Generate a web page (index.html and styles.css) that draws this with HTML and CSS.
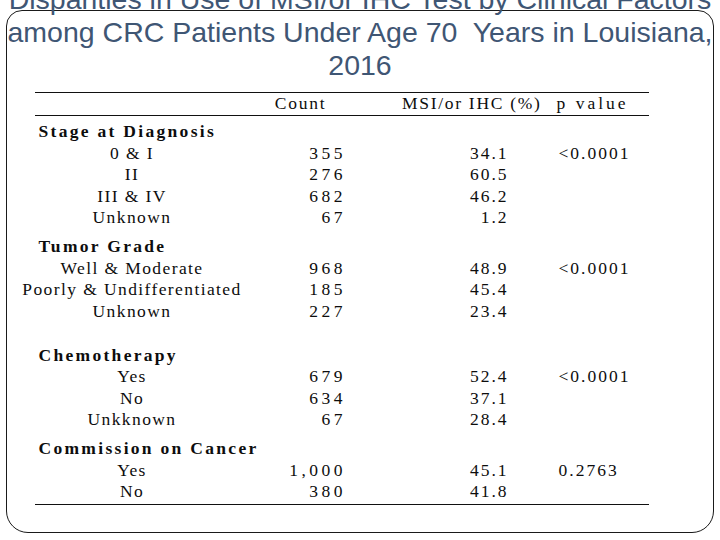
FILE: index.html
```html
<!DOCTYPE html>
<html lang="en">
<head>
<meta charset="utf-8">
<title>Disparities in Use of MSI/or IHC Test</title>
<link rel="stylesheet" href="styles.css">
</head>
<body>
<div class="slide">
  <h1 class="title">
    <span class="tline">Disparities in Use of MSI/or IHC Test by Clinical Factors</span>
    <span class="tline">among CRC Patients Under Age 70&nbsp; Years in Louisiana,</span>
    <span class="tline">2016</span>
  </h1>
  <div class="tbl">
    <div class="row head">
      <div class="c1"></div>
      <div class="c2 h-count">Count</div>
      <div class="c3 h-msi">MSI/or IHC (%)</div>
      <div class="c4 h-p">p value</div>
    </div>

    <div class="row sec first"><div class="c1 sec-label">Stage at Diagnosis</div></div>
    <div class="row"><div class="c1 item">0 &amp; I</div><div class="c2 num">355</div><div class="c3 pct">34.1</div><div class="c4 pv">&lt;0.0001</div></div>
    <div class="row"><div class="c1 item">II</div><div class="c2 num">276</div><div class="c3 pct">60.5</div><div class="c4"></div></div>
    <div class="row"><div class="c1 item">III &amp; IV</div><div class="c2 num">682</div><div class="c3 pct">46.2</div><div class="c4"></div></div>
    <div class="row"><div class="c1 item">Unknown</div><div class="c2 num">67</div><div class="c3 pct">1.2</div><div class="c4"></div></div>

    <div class="row sec"><div class="c1 sec-label">Tumor Grade</div></div>
    <div class="row"><div class="c1 item">Well &amp; Moderate</div><div class="c2 num">968</div><div class="c3 pct">48.9</div><div class="c4 pv">&lt;0.0001</div></div>
    <div class="row"><div class="c1 item">Poorly &amp; Undifferentiated</div><div class="c2 num">185</div><div class="c3 pct">45.4</div><div class="c4"></div></div>
    <div class="row"><div class="c1 item">Unknown</div><div class="c2 num">227</div><div class="c3 pct">23.4</div><div class="c4"></div></div>

    <div class="row sec wide-gap"><div class="c1 sec-label">Chemotherapy</div></div>
    <div class="row"><div class="c1 item">Yes</div><div class="c2 num">679</div><div class="c3 pct">52.4</div><div class="c4 pv">&lt;0.0001</div></div>
    <div class="row"><div class="c1 item">No</div><div class="c2 num">634</div><div class="c3 pct">37.1</div><div class="c4"></div></div>
    <div class="row"><div class="c1 item">Unkknown</div><div class="c2 num">67</div><div class="c3 pct">28.4</div><div class="c4"></div></div>

    <div class="row sec"><div class="c1 sec-label">Commission on Cancer</div></div>
    <div class="row"><div class="c1 item">Yes</div><div class="c2 num">1,000</div><div class="c3 pct">45.1</div><div class="c4 pv">0.2763</div></div>
    <div class="row"><div class="c1 item">No</div><div class="c2 num">380</div><div class="c3 pct">41.8</div><div class="c4"></div></div>
  </div>
</div>
</body>
</html>
```

FILE: styles.css
```css
html, body {
  margin: 0;
  padding: 0;
  background: #ffffff;
}

body {
  width: 720px;
  height: 540px;
  overflow: hidden;
}

.slide {
  box-sizing: border-box;
  margin: 10px 6px 0 6px;
  height: 523px;
  border: 1.5px solid #1a1a1a;
  border-radius: 16px 16px 22px 22px;
}

.title {
  margin: -28px 0 0 0;
  padding: 0;
  font-family: "Liberation Sans", Arial, sans-serif;
  font-weight: normal;
  font-size: 28.5px;
  line-height: 33px;
  color: #3f5674;
  text-align: center;
}

.tline {
  display: block;
  white-space: nowrap;
}

.tbl {
  width: 614px;
  margin: 10px 0 0 27.5px;
  font-family: "Liberation Serif", "Times New Roman", serif;
  font-size: 17.5px;
  color: #0d0d0d;
  border-bottom: 1.5px solid #111111;
  padding-bottom: 1px;
}

.row {
  display: grid;
  grid-template-columns: 195px 117px 212px 90px;
  height: 21.5px;
  line-height: 21.5px;
  white-space: nowrap;
}

.head {
  border-top: 1.5px solid #111111;
  border-bottom: 1.5px solid #111111;
}

.h-count {
  text-align: right;
  padding-right: 20px;
  letter-spacing: 1.8px;
}

.h-msi {
  text-align: right;
  padding-right: 17px;
  letter-spacing: 1.7px;
}

.h-p {
  margin-left: -2px;
  letter-spacing: 3px;
}

.sec {
  margin-top: 7.5px;
}

.sec.first {
  margin-top: 5.5px;
}

.sec.wide-gap {
  margin-top: 22.5px;
}

.sec-label {
  grid-column: 1 / 3;
  padding-left: 4px;
  font-weight: bold;
  letter-spacing: 2.3px;
}

.item {
  display: flex;
  justify-content: center;
  letter-spacing: 1.4px;
}

.num {
  text-align: right;
  letter-spacing: 3.5px;
  margin-right: 0.5px;
}

.pct {
  text-align: right;
  padding-right: 50px;
  letter-spacing: 2px;
}

.pv {
  letter-spacing: 2px;
}
```
